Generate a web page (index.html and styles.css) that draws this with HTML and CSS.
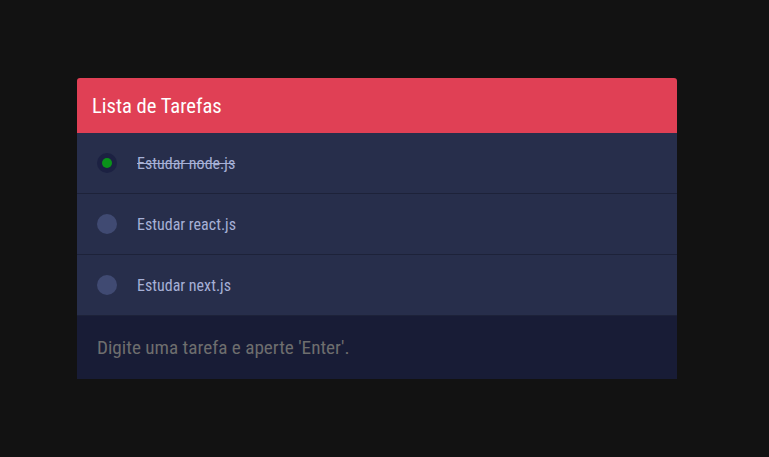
FILE: index.html
```html
<!DOCTYPE html>
<html lang="pt">
<head>
<meta charset="utf-8">
<link rel="stylesheet" href="styles.css">
<title>Lista de Tarefas</title>
</head>
<body>
<main class="page">
  <section class="card">
    <header class="card-header">Lista de Tarefas</header>
    <ul class="tasks">
      <li class="task done"><span class="check"></span><span class="label">Estudar node.js</span></li>
      <li class="task"><span class="check"></span><span class="label">Estudar react.js</span></li>
      <li class="task"><span class="check"></span><span class="label">Estudar next.js</span></li>
    </ul>
    <div class="new-task"><input class="new-input" type="text" placeholder="Digite uma tarefa e aperte 'Enter'."></div>
  </section>
</main>
</body>
</html>
```
FILE: styles.css
```css
* { box-sizing: border-box; }
html, body { margin: 0; height: 100%; }
body {
  background: #121212;
  font-family: Roboto, "Noto Sans", sans-serif;
  font-stretch: condensed;
}
.page { padding: 78px 0 0 77px; }
.card { width: 600px; }
.card-header {
  height: 55px;
  background: #e04055;
  color: #fff;
  font-size: 20.6px;
  display: flex;
  align-items: center;
  padding-left: 15px;
  border-radius: 3px 3px 0 0;
}
.tasks { list-style: none; margin: 0; padding: 0; }
.task {
  height: 61px;
  background: #272e4b;
  border-bottom: 1px solid #1d2239;
  display: flex;
  align-items: center;
  padding-left: 20px;
}
.check {
  width: 20px; height: 20px;
  border-radius: 50%;
  background: #404a72;
  flex: none;
  display: flex;
  align-items: center;
  justify-content: center;
}
.done .check { background: #1c2142; }
.done .check::after {
  content: "";
  width: 10px; height: 10px;
  border-radius: 50%;
  background: #0a931a;
}
.label {
  margin-left: 20px;
  color: #a6b0d6;
  font-size: 16px;
}
.done .label { text-decoration: line-through; }
.new-task {
  height: 63px;
  background: #181c36;
  display: flex;
  align-items: center;
  padding-left: 20px;
}
.new-input {
  background: transparent;
  border: 0;
  outline: 0;
  width: 100%;
  font-family: Roboto, "Noto Sans", sans-serif;
  font-stretch: condensed;
  font-size: 19.2px;
  color: #ccc;
  padding: 0;
}
.new-input::placeholder { color: #6e6e6e; }
```
